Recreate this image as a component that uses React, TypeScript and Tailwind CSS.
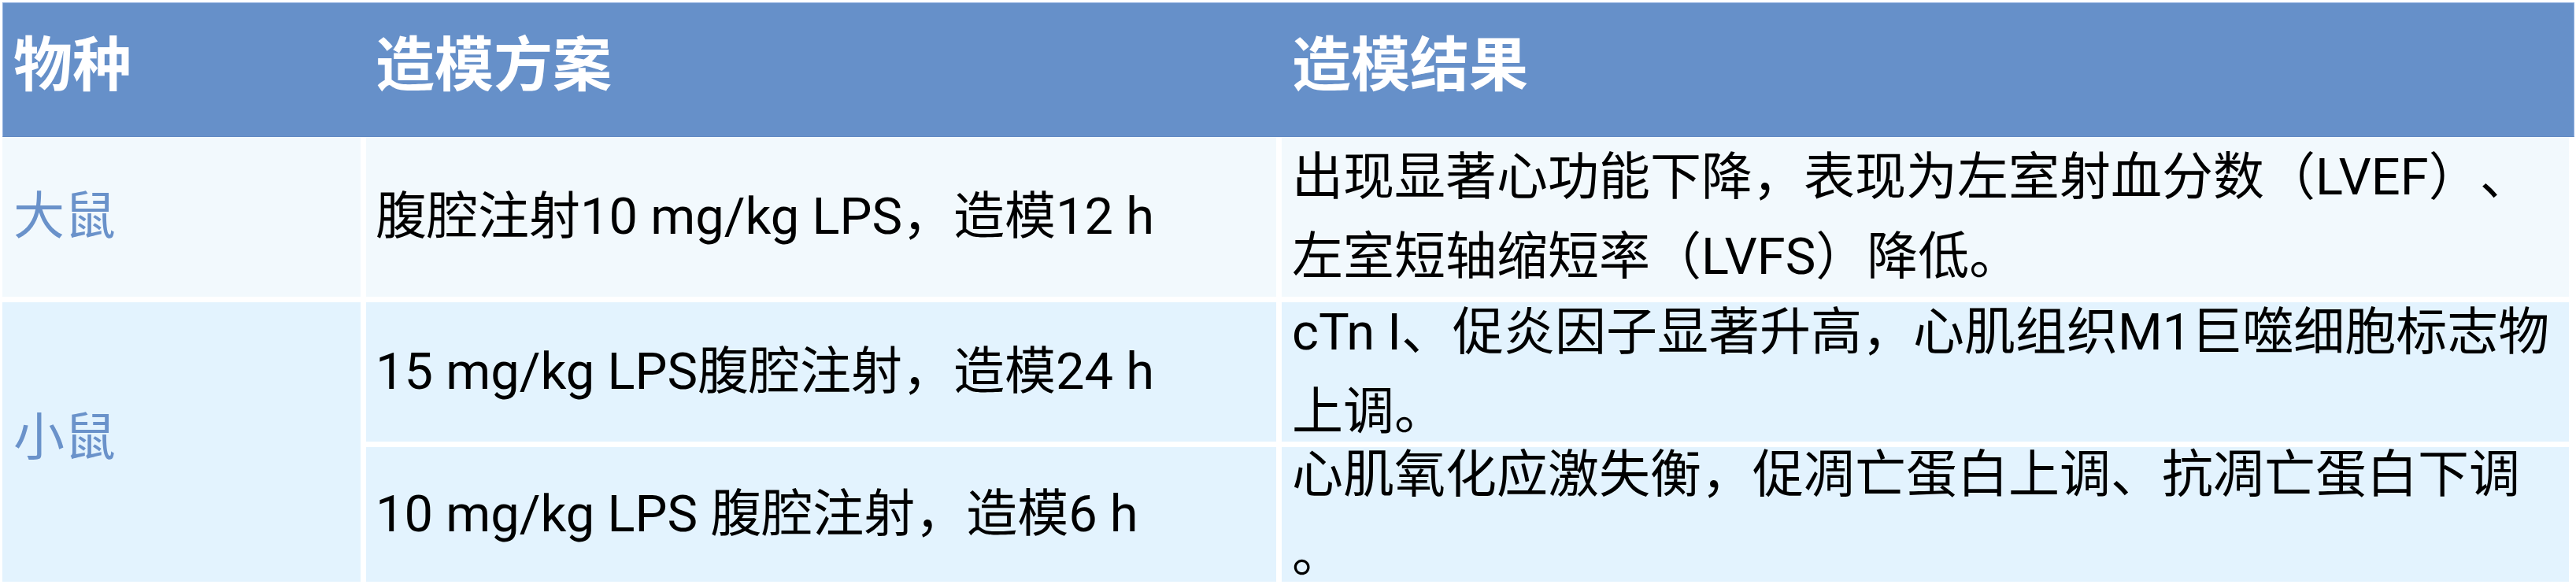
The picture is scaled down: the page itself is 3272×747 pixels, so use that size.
import React from "react";

const font = "font-['Roboto','Noto_Sans_CJK_SC',sans-serif]";

export default function App() {
  return (
    <div className={`w-[3272px] h-[747px] bg-white pt-[3px] pl-[3px] [text-spacing-trim:space-all] ${font}`}>
      {/* Header */}
      <div className="flex w-[3267px] h-[171px] bg-[#6690c9] border-t border-l border-r border-[#93b2e0] border-b border-b-[#5f88c2] text-white font-bold text-[75px] leading-none">
        <div className="w-[462px] flex items-center pl-[13px] pb-[10px]">物种</div>
        <div className="w-[1163px] flex items-center pl-[11px] pb-[10px]">造模方案</div>
        <div className="flex-1 flex items-center pl-[12px] pb-[10px]">造模结果</div>
      </div>

      {/* Body */}
      <div className="grid grid-cols-[455px_1156px_1635px] grid-rows-[203px_177px_171px] gap-x-[7px] gap-y-[7px] text-[65px] text-black">
        {/* Row 1 */}
        <div className="bg-[#f2f9fd] flex items-center pl-[14px] text-[#6a92ca]">大鼠</div>
        <div className="bg-[#f2f9fd] flex items-center pl-[12px] whitespace-nowrap">
          腹腔注射10 mg/kg LPS，造模12 h
        </div>
        <div className="bg-[#f2f9fd] flex items-center pl-[13px] whitespace-nowrap">
          <div className="leading-[101px]">
            <div>出现显著心功能下降，表现为左室射血分数（LVEF）、</div>
            <div>左室短轴缩短率（LVFS）降低。</div>
          </div>
        </div>

        {/* Row 2-3 */}
        <div className="row-span-2 bg-[#e3f3fe] flex items-center pl-[14px] pb-[10px] text-[#6a92ca]">小鼠</div>
        <div className="bg-[#e3f3fe] flex items-center pl-[12px] whitespace-nowrap">
          15 mg/kg LPS腹腔注射，造模24 h
        </div>
        <div className="bg-[#e3f3fe] flex items-center pl-[13px] whitespace-nowrap">
          <div className="leading-[101px]">
            <div>cTn I、促炎因子显著升高，心肌组织M1巨噬细胞标志物</div>
            <div>上调。</div>
          </div>
        </div>

        <div className="bg-[#e3f3fe] flex items-center pl-[12px] whitespace-nowrap">
          10 mg/kg LPS 腹腔注射，造模6 h
        </div>
        <div className="bg-[#e3f3fe] flex items-center pl-[13px] whitespace-nowrap">
          <div className="leading-[101px]">
            <div>心肌氧化应激失衡，促凋亡蛋白上调、抗凋亡蛋白下调</div>
            <div>。</div>
          </div>
        </div>
      </div>
    </div>
  );
}
